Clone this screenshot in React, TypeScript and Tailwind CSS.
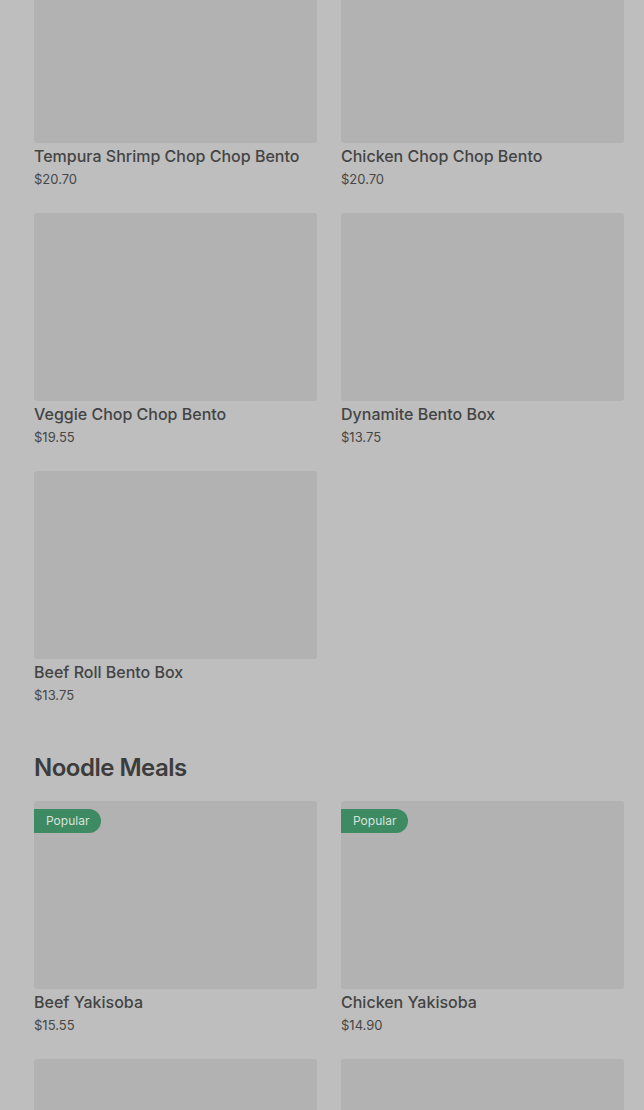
import React from "react";

type Item = { name?: string; price?: string; popular?: boolean };

const BENTO: Item[] = [
  { name: "Tempura Shrimp Chop Chop Bento", price: "$20.70" },
  { name: "Chicken Chop Chop Bento", price: "$20.70" },
  { name: "Veggie Chop Chop Bento", price: "$19.55" },
  { name: "Dynamite Bento Box", price: "$13.75" },
  { name: "Beef Roll Bento Box", price: "$13.75" },
];

// last two are only peeking in at the bottom of the view
const NOODLES: Item[] = [
  { name: "Beef Yakisoba", price: "$15.55", popular: true },
  { name: "Chicken Yakisoba", price: "$14.90", popular: true },
  {},
  {},
];

function MenuCard({ item }: { item: Item }) {
  return (
    <div className="flex flex-col">
      <div className="relative h-[188px] rounded-[3px] bg-[#b2b2b2]">
        {item.popular && (
          <span className="absolute left-0 top-[8px] rounded-r-full bg-[#3e8a62] pl-[12px] pr-[12px] text-[12px] leading-[24px] text-[#d6e4dc]">
            Popular
          </span>
        )}
      </div>
      {item.name && (
        <>
          <p className="mt-[3px] text-[16px] font-medium leading-[20px] text-[#444444]">
            {item.name}
          </p>
          <p className="mt-[4px] text-[13px] leading-[18px] text-[#474747]">{item.price}</p>
        </>
      )}
    </div>
  );
}

export default function App() {
  return (
    <div
      className="h-[1110px] overflow-hidden bg-[#bebebe]"
      style={{ fontFamily: "Inter, 'Noto Sans', sans-serif" }}
    >
      <div className="-mt-[45px] pl-[34px] pr-[20px]">
        <div className="grid grid-cols-2 gap-x-[24px] gap-y-[25px]">
          {BENTO.map((i, n) => (
            <MenuCard key={n} item={i} />
          ))}
        </div>

        <h2 className="mt-[48px] mb-[17px] text-[24px] font-semibold leading-[32px] tracking-[-0.5px] text-[#3c3c3c]">
          Noodle Meals
        </h2>
        <div className="grid grid-cols-2 gap-x-[24px] gap-y-[25px]">
          {NOODLES.map((i, n) => (
            <MenuCard key={n} item={i} />
          ))}
        </div>
      </div>
    </div>
  );
}
